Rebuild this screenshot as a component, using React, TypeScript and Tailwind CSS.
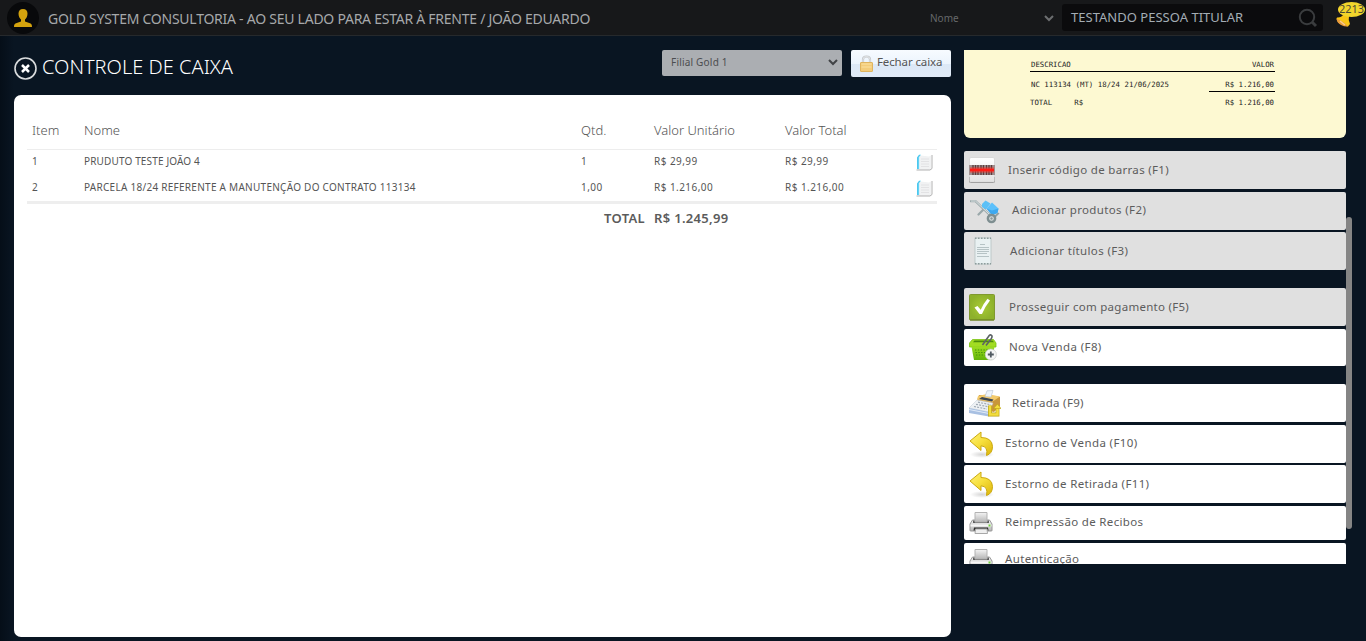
import React from "react";

const Barcode = () => (
  <svg width="26" height="26" viewBox="0 0 26 26">
    <defs>
      <linearGradient id="bc" x2="0" y2="1">
        <stop offset="0" stopColor="#fff" />
        <stop offset="1" stopColor="#e2e2e2" />
      </linearGradient>
    </defs>
    <rect x=".5" y=".5" width="25" height="24.5" rx="1.5" fill="url(#bc)" stroke="#dadada" />
    <path d="M0 20v4q0 1.500 1.500 1.500h23q1.500 0 1.500-1.500v-4" fill="none" stroke="#a0a0a0" />
    <rect y="8" width="26" height="10" fill="#a08f8f" />
    <path d="M4 8v10M6.500 8v10M9 8v10M12 8v10M14.500 8v10M17.500 8v10M20 8v10M22.500 8v10" stroke="#5c3c3c" strokeWidth="1.300" />
    <rect x="1" y="10.500" width="24" height="5" fill="#ff2b24" opacity=".65" />
    <rect x="1" y="12" width="24" height="2" fill="#ff1a14" />
  </svg>
);

const Trolley = () => (
  <svg width="30" height="25" viewBox="0 0 30 25">
    <path d="M1 2.200h4.500l14 13.500M8.500 15.500L14 10" fill="none" stroke="#9aa8aa" strokeWidth="2.200" strokeLinecap="round" />
    <path d="M1 2h4.500l14 13.500" fill="none" stroke="#e3eaeb" strokeWidth=".9" />
    <path d="M12 5l3.500-3.500 5 3-4.500 6-4-2.500z" fill="#5cc0f6" />
    <path d="M16.500 9.500L22 3.500l6.500 6-1 4.500-5.500 2z" fill="#5cc0fb" />
    <path d="M16.500 9.500l5.500 2 6.500-2-1 4.500-5.500 2.500z" fill="#3da9f0" />
    <path d="M24 17l4-3.500 1.500 1-4 4z" fill="#8fa0a3" />
    <circle cx="21.500" cy="19.500" r="3.600" fill="#dce3e3" stroke="#7f8f91" strokeWidth="2.500" />
    <circle cx="21.500" cy="19.500" r="1.200" fill="#8b999b" />
  </svg>
);

const Receipt = () => (
  <svg width="18" height="28" viewBox="0 0 18 28">
    <rect x="1" y="1" width="16" height="26" fill="#e9f1f2" stroke="#b6c4c4" strokeWidth=".8" />
    <path d="M1 1.200h16M1 26.800h16" stroke="#8c9c9b" strokeWidth="1.600" strokeDasharray="1.500 1.500" />
    <path d="M6 7.500h5M3 10.500h12M3 12.500h12M3 14.500h12M3 16.500h10M3 19.500h12" stroke="#b6c3c5" />
  </svg>
);

const Check = () => (
  <svg width="26" height="27" viewBox="0 0 26 27">
    <defs>
      <radialGradient id="ck">
        <stop offset="0" stopColor="#a9cb35" />
        <stop offset="1" stopColor="#8db12b" />
      </radialGradient>
    </defs>
    <rect x=".5" y=".5" width="25" height="25.500" rx="1" fill="url(#ck)" stroke="#80992f" />
    <path d="M1 26h24" stroke="#677d20" />
    <path d="M5.500 13.500L8.500 12l3.200 3.800Q14.500 9.500 18.500 4.800L21 6.500Q16 12.500 13 20h-2.500z" fill="#fff" />
  </svg>
);

const Basket = () => (
  <svg width="28" height="27" viewBox="0 0 28 27">
    <defs>
      <linearGradient id="bk" x2="0" y2="1">
        <stop offset="0" stopColor="#9edd21" />
        <stop offset="1" stopColor="#62b307" />
      </linearGradient>
    </defs>
    <path d="M.5 9l3-3.500h21L27 9v4H.5z" fill="#a2dc22" stroke="#7ac313" strokeWidth=".8" />
    <path d="M4 8.200l1.500-1.700h18L25 8.200z" fill="#4c8a0c" />
    <path d="M2.500 12.500h23L23 26H5z" fill="url(#bk)" />
    <path d="M6 16h16M6.500 18.500h11M7 21h9" stroke="#43900a" strokeWidth="1.200" strokeDasharray="1.400 1.400" />
    <path d="M13.500 11l6-8.500q2-3 3.500-.5.200 1.300-1 3L17 11.500" fill="none" stroke="#5c6365" strokeWidth="1.600" />
    <circle cx="21.800" cy="20.500" r="5.600" fill="#f4f5f5" stroke="#c3c8c3" strokeWidth=".6" />
    <path d="M21.800 17.500v6M18.800 20.500h6" stroke="#515b62" strokeWidth="1.800" />
  </svg>
);

const Register = () => (
  <svg width="32" height="27" viewBox="0 0 32 27">
    <path d="M8 11l2-6 17 1 4 1v9l-6 6-17-4z" fill="#c8963b" />
    <path d="M9 6l9-2 13 2.500-8 5.500L8 9.500z" fill="#f3ca6b" />
    <path d="M10 9l13 2.500 1.500-2L13 7z" fill="#3c4754" />
    <path d="M16 6.500L18 .8l6-.3-2 6.500z" fill="#eef4fa" stroke="#b3c0ce" strokeWidth=".6" />
    <path d="M0 18l8-8 16 3-4 9z" fill="#eef1f4" stroke="#c0cad5" strokeWidth=".5" />
    <path d="M0 18l20 4v4.500L0 23z" fill="#a8c0e2" />
    <path d="M0 19.500l20 4" stroke="#e1ebf8" />
    <path d="M5 16.500l13 2.600M7 14.300l13 2.600M9 12.200l13 2.600" stroke="#a1abb5" strokeWidth="1.200" strokeDasharray="2 1.200" />
    <path d="M21 15.500v9h7.500V18" fill="none" stroke="#b8a00f" strokeWidth="3.800" />
    <path d="M21 15.500v9h7.500V18" fill="none" stroke="#f3dd3e" strokeWidth="2.500" />
    <path d="M24.500 18.500l4-4.500 3.500 4.500z" fill="#f3dd3e" stroke="#b8a00f" strokeWidth=".6" />
  </svg>
);

const Undo = () => (
  <svg width="25" height="27" viewBox="0 0 25 27">
    <defs>
      <linearGradient id="un" x2=".8" y2="1">
        <stop offset="0" stopColor="#fff27b" />
        <stop offset=".5" stopColor="#f7e03d" />
        <stop offset="1" stopColor="#dfba12" />
      </linearGradient>
      <radialGradient id="us">
        <stop offset="0" stopColor="#d5d5d5" />
        <stop offset="1" stopColor="#d5d5d5" stopOpacity="0" />
      </radialGradient>
    </defs>
    <ellipse cx="13" cy="23.500" rx="12" ry="3.500" fill="url(#us)" />
    <path d="M1 10L12 1v5.500q11 0 11.500 9 0 7-6 9 2-9-5.500-9.700V19.500z" fill="url(#un)" stroke="#cba910" strokeLinejoin="round" />
  </svg>
);

const Printer = () => (
  <svg width="24" height="22" viewBox="0 0 24 22" className="shrink-0">
    <defs>
      <linearGradient id="pr" x2="0" y2="1">
        <stop offset="0" stopColor="#f4f4f4" />
        <stop offset="1" stopColor="#b5b5b5" />
      </linearGradient>
    </defs>
    <path d="M3.500 8L1 12v6.500q0 .5.800.5h20.400q.8 0 .8-.5V12l-2.500-4z" fill="url(#pr)" stroke="#979797" />
    <path d="M4 8.500h16v2.500H4z" fill="#5e5e5e" />
    <path d="M6 .5h12v9.500H6z" fill="url(#pr)" stroke="#b3b3b3" />
    <path d="M1.500 13.500h21" stroke="#f6f6f6" strokeWidth="2" />
    <path d="M5 15.500h14l.5 3h-15z" fill="#303030" />
    <path d="M6.500 17h11.500l.5 4.500H6z" fill="#efefef" stroke="#a8a8a8" />
    <path d="M19.500 12.500h2v2h-2z" fill="#70d23b" />
  </svg>
);

const Book = () => (
  <svg width="17" height="17" viewBox="0 0 17 17" className="-ml-px">
    <path d="M1 3L4 1.500h1l8 1L15 1.500v13L13 16H1z" fill="#f1f2f3" />
    <path d="M16 1v13.500l-2 1.500H.5" fill="none" stroke="#b1b1b1" />
    <path d="M1 3.500v11.500h2V3L5 .8H3z" fill="#4bc8ef" />
    <path d="M5 5h8M5 7.500h8M5 10h8M5 12.500h8" stroke="#e2e2e4" />
    <path d="M3.200 3v12" stroke="#c6efff" strokeWidth=".7" />
  </svg>
);

const Lock = () => (
  <svg width="13" height="17" viewBox="0 0 13 17">
    <path d="M3 9V4.500Q3 1.500 6.500 1.500T10 4.500V9" fill="none" stroke="#c4c7ca" strokeWidth="2.200" />
    <path d="M3 9V4.500Q3 1.500 6.500 1.500T10 4.500V9" fill="none" stroke="#e4e6e8" strokeWidth="1" />
    <rect x=".5" y="7.500" width="12" height="9" rx=".5" fill="#f3cc7a" stroke="#dfb45f" />
    <path d="M1.500 9h10M1.500 12h10" stroke="#fbe1a0" />
  </svg>
);

const Bell = () => (
  <svg width="15" height="13" viewBox="0 0 15 13">
    <path d="M1 3.500Q5 4 8 0l5 2q-1 4 1 8l-2 2.500Q2 11 .5 5z" fill="#f8c514" />
    <path d="M.5 4.500q3 1 6.500 3.500t5 4.500q-3 .5-7-1.500T.5 4.500z" fill="#e99b3a" />
    <path d="M4 7l5 4" stroke="#f7cf92" strokeWidth="1.500" />
  </svg>
);

const Chevron = ({ className }: { className: string }) => (
  <svg width="10" height="7" viewBox="0 0 10 7" fill="none" className={className}>
    <path d="M1 1l4 4 4-4" stroke="currentColor" strokeWidth="2" />
  </svg>
);

type Action = { label: string; icon: React.ReactNode; box: string; text: string };

const actions: Action[] = [
  { label: "Inserir código de barras (F1)", icon: <Barcode />, box: "h-[38px] bg-[#e0e0e0] pl-[5px]", text: "ml-[13px] tracking-[0.32px]" },
  { label: "Adicionar produtos (F2)", icon: <Trolley />, box: "mt-[3px] h-[38px] bg-[#e0e0e0] pl-[6px]", text: "-mt-[2px] ml-[12px] tracking-[0.36px]" },
  { label: "Adicionar títulos (F3)", icon: <Receipt />, box: "mt-[2px] h-[38px] bg-[#e0e0e0] pl-[10px]", text: "ml-[18px] tracking-[0.36px]" },
  { label: "Prosseguir com pagamento (F5)", icon: <Check />, box: "mt-[18px] h-[38px] bg-[#e0e0e0] pl-[5px]", text: "ml-[14px] tracking-[0.28px]" },
  { label: "Nova Venda (F8)", icon: <Basket />, box: "mt-[3px] h-[37px] bg-white pl-[5px]", text: "-mt-[2px] ml-[12px] tracking-[0.38px]" },
  { label: "Retirada (F9)", icon: <Register />, box: "mt-[18px] h-[38px] bg-white pl-[5px]", text: "ml-[11px] tracking-[0.32px]" },
  { label: "Estorno de Venda (F10)", icon: <Undo />, box: "mt-[3px] h-[38px] bg-white pl-[5px]", text: "-mt-[2px] ml-[11px] tracking-[0.38px]" },
  { label: "Estorno de Retirada (F11)", icon: <Undo />, box: "mt-[2px] h-[38px] bg-white pl-[5px]", text: "ml-[11px] tracking-[0.35px]" },
  { label: "Reimpressão de Recibos", icon: <Printer />, box: "mt-[3px] h-[34px] bg-white pl-[5px]", text: "-mt-[2px] ml-[12px] tracking-[0.33px]" },
  { label: "Autenticação", icon: <Printer />, box: "mt-[3px] h-[34px] bg-white pl-[5px]", text: "-mt-[2px] ml-[12px] tracking-[0.35px]" },
];

const rows = [
  ["1", "PRUDUTO TESTE JOÃO 4", "1", "R$ 29,99", "R$ 29,99"],
  ["2", "PARCELA 18/24 REFERENTE A MANUTENÇÃO DO CONTRATO 113134", "1,00", "R$ 1.216,00", "R$ 1.216,00"],
];

const cols = "grid grid-cols-[52px_497px_73px_131px_132px_20px] pl-[5px]";

export default function App() {
  return (
    <div className="flex h-[641px] w-[1366px] flex-col overflow-hidden bg-[#091522] font-['Noto_Sans',sans-serif] text-[#555] [background-image:linear-gradient(90deg,#050e18_0,#091522_14px)]">
      <header className="flex h-9 shrink-0 items-center border-b border-[#26292c] bg-[#17181a]">
        <div className="ml-[7px] flex size-8 items-center justify-center rounded-full bg-[#08090b]">
          <svg width="18" height="18" viewBox="0 0 18 18" fill="#d4a30e">
            <path d="M9 0c3 0 4.500 2 4.500 4.500 0 3-1.200 5-2.500 6v2l5 1.800c1.500.6 2 1.700 2 3.700H0c0-2 .5-3.100 2-3.700l5-1.800v-2c-1.300-1-2.500-3-2.500-6C4.500 2 6 0 9 0z" />
          </svg>
        </div>
        <div className="ml-[9px] w-[882px] pt-[2px] text-[14px] whitespace-nowrap tracking-[-0.25px] text-[#a6a8aa]">
          GOLD SYSTEM CONSULTORIA - AO SEU LADO PARA ESTAR À FRENTE / JOÃO EDUARDO
        </div>
        <div className="flex w-[124px] items-center justify-between pt-[2px] text-[10px] tracking-[0px] text-[#66686a]">
          Nome
          <Chevron className="text-[#6c6e70]" />
        </div>
        <div className="ml-[8px] flex h-[27px] w-[261px] items-center justify-between rounded-[3px] bg-[#0b0b0d] pr-[5px] pl-[9px]">
          <span className="pt-px text-[13px] whitespace-nowrap tracking-[0.02px] text-[#a4adb5]">TESTANDO PESSOA TITULAR</span>
          <svg width="20" height="20" viewBox="0 0 20 20" fill="none" stroke="#3a3c3e">
            <circle cx="9" cy="9" r="7.200" strokeWidth="2" />
            <path d="M14 14l4 4" strokeWidth="3" />
          </svg>
        </div>
        <div className="relative ml-[13px] h-[30px] w-[30px]">
          <div className="absolute top-[11px] left-0"><Bell /></div>
          <div className="absolute top-[-1px] left-[2px] flex h-[15px] w-[27px] items-center justify-center rounded-[50%] bg-[#f2d52c] text-[11px] text-[#4c4b34]">2213</div>
        </div>
      </header>

      <div className="flex min-h-0 flex-1 pt-[14px] pl-[14px]">
        <main className="flex w-[937px] flex-col">
          <div className="flex h-[45px] items-start">
            <svg width="24" height="24" viewBox="0 0 24 24" fill="none" className="mt-[6px]">
              <circle cx="11.500" cy="12.500" r="10.500" stroke="#dadcdd" strokeWidth="1.600" />
              <path d="M8 9l7 7M15 9l-7 7" stroke="#fff" strokeWidth="2.500" />
            </svg>
            <h1 className="ml-[4px] w-[620px] text-[20px] leading-[34px] font-light whitespace-nowrap text-white">CONTROLE DE CAIXA</h1>
            <div className="flex h-[26px] w-[180px] items-center justify-between rounded-[2px] bg-[#abaeb2] pr-[4px] pb-px pl-[9px] text-[10px] tracking-[0.2px] text-[#4b4d50]">
              Filial Gold 1
              <Chevron className="text-[#414346]" />
            </div>
            <button className="ml-[9px] flex h-[27px] w-[100px] items-center rounded-[2px] bg-[linear-gradient(#f7fbff_0%,#ecf4fd_50%,#dce8f6_51%,#e0eaf7_100%)] pl-[9px] text-[11.5px] whitespace-nowrap tracking-[-0.12px] text-[#555]">
              <Lock />
              <span className="-mt-[3px] ml-[4px]">Fechar caixa</span>
            </button>
          </div>

          <section className="h-[542px] rounded-[7px] bg-white pt-[17px] pr-[14px] pl-[13px]">
            <div className={`${cols} h-[38px] border-b border-[#ededed] text-[13px] leading-[37px] font-light text-[#555]`}>
              <span>Item</span>
              <span>Nome</span>
              <span>Qtd.</span>
              <span>Valor Unitário</span>
              <span>Valor Total</span>
            </div>
            <div className="border-b-[3px] border-[#eee]">
              {rows.map((r) => (
                <div key={r[0]} className={`${cols} h-[25.500px] items-center text-[10px] whitespace-nowrap`}>
                  {r.map((c, i) => (
                    <span key={i} className={i === 1 ? (r[0] === "1" ? "-mt-[2px] tracking-[0.15px]" : "-mt-[2px] tracking-[0.27px]") : "-mt-[2px] tracking-[0.45px]"}>{c}</span>
                  ))}
                  <Book />
                </div>
              ))}
            </div>
            <div className="grid grid-cols-[618px_9px_auto] pt-[4px] text-[13px] leading-[20px] font-semibold tracking-[0.32px] text-[#5b5b5b]">
              <span className="text-right">TOTAL</span>
              <span />
              <span>R$ 1.245,99</span>
            </div>
          </section>
        </main>

        <aside className="ml-[13px] flex h-[514px] w-[388px] overflow-hidden">
          <div className="w-[382px] shrink-0">
            <div className="h-[88px] rounded-b-[6px] bg-[#fdf9d2] pt-[8px] pl-[66px] font-['DejaVu_Sans_Mono',monospace] text-[7.350px] leading-[13px] whitespace-pre text-[#222]">
              <div className="flex h-[14px] w-[245px] justify-between border-b border-black pr-px pl-px">
                <span>DESCRICAO</span>
                <span>VALOR</span>
              </div>
              <div className="flex h-[20px] w-[245px] items-end justify-between">
                <span className="pb-px pl-[1px] tracking-[0.03px]">NC 113134 (MT) 18/24 21/06/2025</span>
                <span className="w-[66px] border-b border-black pr-px text-right">R$ 1.216,00</span>
              </div>
              <div className="flex w-[245px] justify-between pt-[4px] pr-px">
                <span>TOTAL     R$</span>
                <span>R$ 1.216,00</span>
              </div>
            </div>
            <nav className="mt-[13px]">
              {actions.map((a) => (
                <div key={a.label} className={`flex items-center rounded-[2px] ${a.box}`}>
                  {a.icon}
                  <span className={`text-[11.5px] whitespace-nowrap text-[#5c5c5c] ${a.text}`}>{a.label}</span>
                </div>
              ))}
            </nav>
          </div>
          <div className="mt-[167px] h-[312px] w-[6px] rounded-full bg-[#858585]" />
        </aside>
      </div>
    </div>
  );
}
